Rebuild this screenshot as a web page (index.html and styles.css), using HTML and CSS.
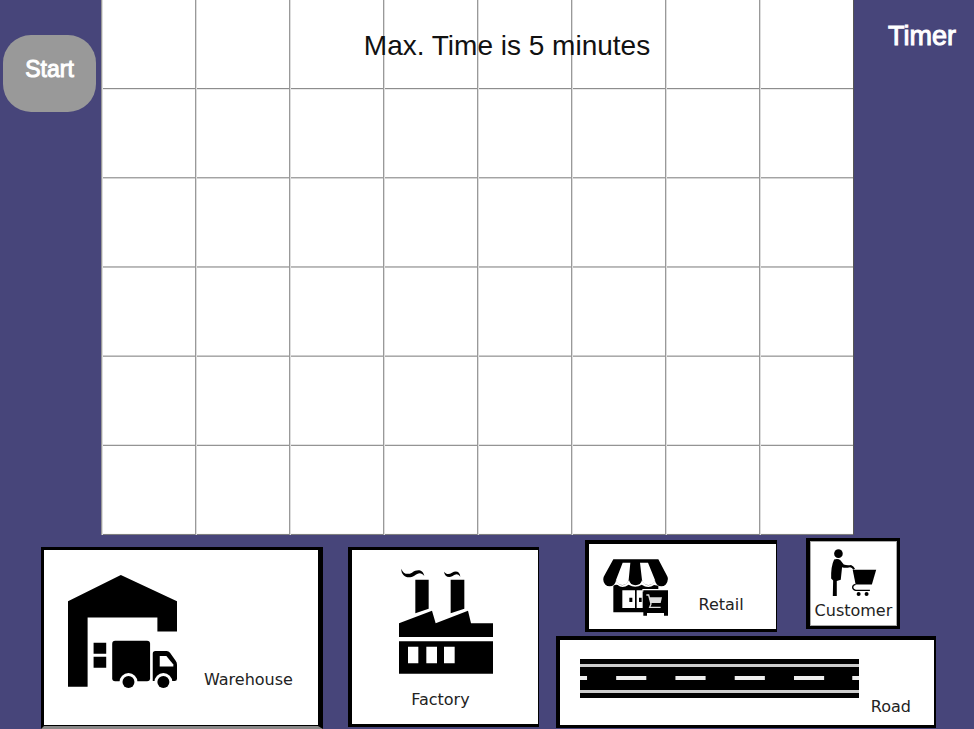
FILE: index.html
```html
<!DOCTYPE html>
<html lang="en">
<head>
  <meta charset="utf-8">
  <title>City builder</title>
  <link rel="stylesheet" href="styles.css">
</head>
<body>
  <main class="game">
    <section class="stage">
      <div class="side"><button class="start" type="button">Start</button></div>
      <div class="board"><p class="notice">Max. Time is 5 minutes</p></div>
      <div class="side"><p class="timer">Timer</p></div>
    </section>

    <section class="tray">
      <figure class="card warehouse">
        <svg width="109" height="113" viewBox="115 134 328 340" aria-hidden="true">
          <path d="M115 213 274 134 443 213V304H384V262H174V470H115Z"/>
          <path d="M192 338h38v33h-38zM192 380h38v33h-38z"/>
          <rect x="248" y="332" width="114" height="122" rx="9"/>
          <path d="M378 363H412Q418 363 422 368L439 392Q443 397 443 404V446Q443 453 436 453H370V371Q370 363 378 363Z"/>
          <path class="paper" d="M391 378H411L432 403V409H391Z"/>
          <circle class="paper" cx="297" cy="456" r="27"/>
          <circle class="paper" cx="402" cy="456" r="27"/>
          <circle cx="297" cy="456" r="18"/>
          <circle cx="402" cy="456" r="18"/>
        </svg>
        <figcaption>Warehouse</figcaption>
      </figure>

      <figure class="card factory">
        <svg width="94" height="106" viewBox="178 112 282 318" aria-hidden="true">
          <path d="M227 147H267V234L227 248ZM333 147H374V234L333 248Z"/>
          <path d="M178 278 277 240 288 278 385 240 394 278H460V319H178Z"/>
          <path d="M178 332H460V429H178Z"/>
          <path class="paper" d="M205 348h31v50h-31zM260 348h32v50h-32zM313 348h32v50h-32z"/>
          <path d="M185 114C190 130 204 133 217 126C232 116 249 115 254 136C244 123 235 127 224 135C205 146 184 137 185 114Z"/>
          <path d="M313 123C321 133 329 131 337 126C349 119 361 123 362 138C353 127 348 130 339 136C327 143 315 138 313 123Z"/>
        </svg>
        <figcaption>Factory</figcaption>
      </figure>

      <div class="lots">
        <div class="lots-row">
          <figure class="card retail">
            <svg width="65" height="57" viewBox="84 87 195 171" aria-hidden="true">
              <path d="M115 88H250L276 137Q280 144 278 150A19 19 0 0 1 240 150Q230 166 220 166T201 150A20 20 0 0 1 162 150Q152 166 142 166T123 150A19 19 0 0 1 85 150Q84 142 89 135Z"/>
              <path class="paper" d="M143 98H166L161 150Q156 165 142 165T123 150ZM195 98H219L240 150Q234 165 220 165T201 150Z"/>
              <path d="M115 167Q123 162 128 165Q142 177 161 164Q181 176 200 164Q220 177 237 165L250 167V247H115Z"/>
              <path class="paper" d="M142 181H180V234H142ZM185 181H203V234H185Z"/>
              <path d="M163 203h9v13h-9zM192 203h8v13h-8z"/>
              <path class="paper" d="M202 177H279V185H202Z"/>
              <path d="M207 181H279V257H267V249H216V257H205V181Z"/>
              <path class="goods" d="M223 202H261L257 219H227Z"/>
              <path class="wire" d="M214 195H221L228 222L224 232H257"/>
            </svg>
            <figcaption>Retail</figcaption>
          </figure>
          <figure class="card customer">
            <svg width="47" height="48" viewBox="122 85 141 145" aria-hidden="true">
              <circle cx="147" cy="99" r="13"/>
              <path d="M134 117Q145 112 153 119L163 132Q174 135 185 133Q193 136 197 145L192 148Q188 141 182 140Q168 143 158 140L154 178L142 182V227H130L131 180L125 174Q124 137 134 117Z"/>
              <path d="M190 148H261L248 192H199Z"/>
              <path class="rail" d="M199 192C187 194 187 207 199 210H242"/>
              <circle cx="208" cy="221" r="6"/>
              <circle cx="232" cy="221" r="6"/>
            </svg>
            <figcaption>Customer</figcaption>
          </figure>
        </div>
        <figure class="card road">
          <svg class="lane" height="39" viewBox="0 0 278 39" preserveAspectRatio="none" aria-hidden="true">
            <path d="M0 0H278V39H0Z"/>
            <path class="verge" d="M0 5H278V8H0ZM0 31H278V34H0Z"/>
            <path class="dash" d="M0 17h7v4h-7zM36 17h30v4h-30zM95 17h30v4h-30zM154 17h30v4h-30zM213 17h30v4h-30zM271 17h7v4h-7z"/>
          </svg>
          <figcaption>Road</figcaption>
        </figure>
      </div>
    </section>
  </main>
</body>
</html>
```
FILE: styles.css
```css
* {
  box-sizing: border-box;
}

body {
  margin: 0;
  background: #47457a;
  font-family: "Liberation Sans", Arial, sans-serif;
}

p,
figure {
  margin: 0;
}

.game {
  display: flex;
  flex-direction: column;
  min-height: 100vh;
}

.stage {
  flex: 1;
  display: grid;
  grid-template-columns: 101px 1fr 120px;
}

.side {
  padding: 0 3px;
}

.start {
  display: block;
  width: 93px;
  height: 77px;
  margin-top: 35px;
  padding: 0 0 8px;
  border: 0;
  border-radius: 28px;
  background: #999;
  color: #fff;
  font: 23px "Liberation Sans", Arial, sans-serif;
  -webkit-text-stroke: 1px #fff;
}

.timer {
  padding: 20px 15px 0 0;
  color: #fff;
  font-size: 27px;
  line-height: 32px;
  text-align: right;
  -webkit-text-stroke: 1px #fff;
}

.board {
  padding: 30px 0 0 60px;
  border-right: 1px solid #555;
  background-color: #fff;
  background-image:
    linear-gradient(to right, #999 1px, #ddd 1px, #ddd 2px, transparent 2px),
    linear-gradient(to top, #777 1px, transparent 1px);
  background-size: 12.5% 100%, 100% calc(100% / 6);
}

.notice {
  color: #111;
  font-size: 28px;
  line-height: 32px;
  text-align: center;
}

.tray {
  display: grid;
  grid-template-columns: 282fr 192fr 380fr;
  column-gap: 20px;
  align-items: start;
  padding: 3px 38px 0 41px;
}

.card {
  display: flex;
  border: 3px solid #000;
  background: #fff;
  color: #222;
  font: 16px/20px "DejaVu Sans", sans-serif;
}

.card svg {
  flex: none;
  fill: #000;
}

.card .paper {
  fill: #fff;
}

.card figcaption {
  flex: none;
}

.warehouse {
  gap: 27px;
  height: 182px;
  margin-top: 9px;
  padding: 25px 0 36px 24px;
  border-right-width: 5px;
  border-bottom: 3px solid #888;
  box-shadow: inset 0 -1px #000;
}

.warehouse figcaption,
.retail figcaption,
.road figcaption {
  align-self: flex-end;
}

.factory {
  flex-direction: column;
  align-items: center;
  gap: 16px;
  height: 180px;
  margin: 9px -3px 0 5px;
  padding: 18px 0 0 3px;
  border-width: 3px 1px 3px 4px;
}

.factory figcaption {
  padding-right: 12px;
}

.lots {
  display: grid;
  gap: 4px;
}

.lots-row {
  display: grid;
  grid-template-columns: 192fr 94fr;
  align-items: start;
  column-gap: 29px;
  padding: 0 36px 0 29px;
}

.retail {
  gap: 31px;
  height: 92px;
  margin-top: 2px;
  padding: 15px 0 14px 14px;
  border-width: 4px 1px 3px 4px;
}

.retail .goods {
  fill: #ddd;
}

.retail .wire {
  fill: none;
  stroke: #ddd;
  stroke-width: 4;
}

.customer {
  flex-direction: column;
  align-items: center;
  gap: 4px;
  height: 91px;
  padding-top: 8px;
  border-width: 3px 3px 3px 4px;
  box-shadow: inset 0 0 0 1px #aaa;
}

.customer .rail {
  fill: none;
  stroke: #000;
  stroke-width: 4;
}

.road {
  gap: 12px;
  height: 92px;
  padding: 19px 23px 8px 20px;
  border-width: 4px 2px 3px 4px;
}

.card .lane {
  flex: 1;
  min-width: 0;
}

.road .verge {
  fill: #ccc;
}

.road .dash {
  fill: #eee;
}
```
